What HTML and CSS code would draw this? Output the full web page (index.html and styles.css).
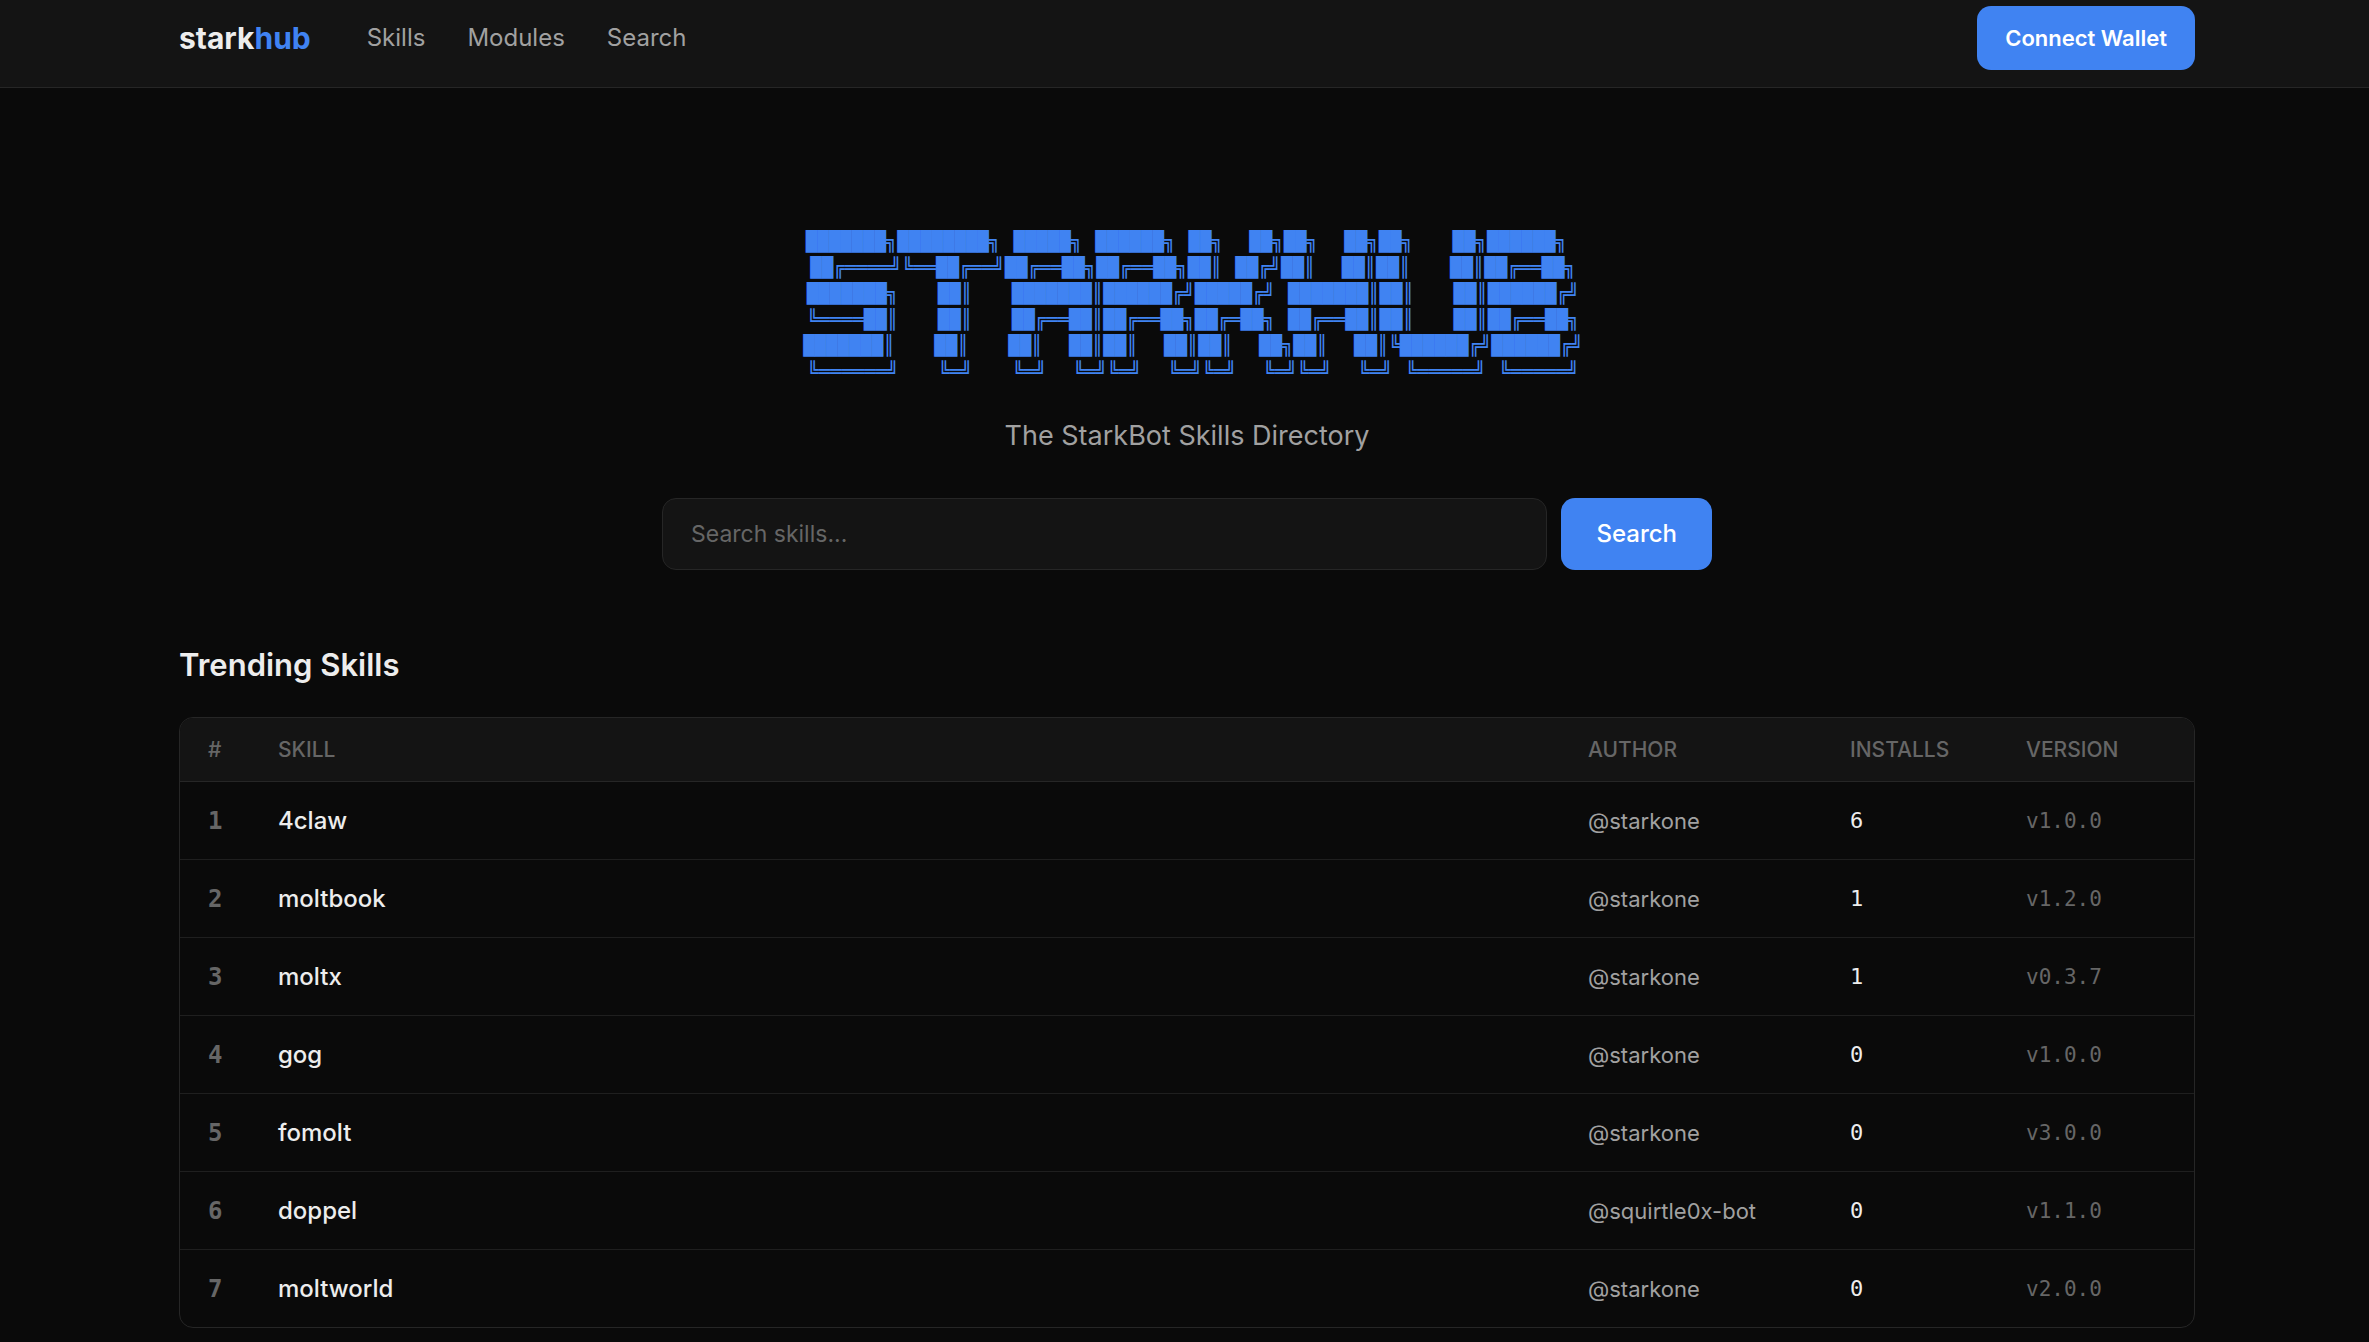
FILE: index.html
```html
<!doctype html>
<html lang="en">
<head>
    <meta charset="UTF-8">
    <title>starkhub</title>
    <link rel="stylesheet" href="styles.css">
</head>
<body>
<header class="header">
    <div class="container header-inner">
        <a class="logo" href="#">stark<span class="logo-accent">hub</span></a>
        <nav class="nav">
            <a href="#">Skills</a>
            <a href="#">Modules</a>
            <a href="#">Search</a>
        </nav>
        <button class="btn btn-wallet" type="button">Connect Wallet</button>
    </div>
</header>

<main class="container">
    <section class="hero">
        <div class="banner">
            <div class="line">███████╗████████╗<span> </span>█████╗<span> </span>██████╗<span> </span>██╗<span>  </span>██╗██╗<span>  </span>██╗██╗<span>   </span>██╗██████╗<span> </span></div>
            <div class="line">██╔════╝╚══██╔══╝██╔══██╗██╔══██╗██║<span> </span>██╔╝██║<span>  </span>██║██║<span>   </span>██║██╔══██╗</div>
            <div class="line">███████╗<span>   </span>██║<span>   </span>███████║██████╔╝█████╔╝<span> </span>███████║██║<span>   </span>██║██████╔╝</div>
            <div class="line">╚════██║<span>   </span>██║<span>   </span>██╔══██║██╔══██╗██╔═██╗<span> </span>██╔══██║██║<span>   </span>██║██╔══██╗</div>
            <div class="line">███████║<span>   </span>██║<span>   </span>██║<span>  </span>██║██║<span>  </span>██║██║<span>  </span>██╗██║<span>  </span>██║╚██████╔╝██████╔╝</div>
            <div class="line">╚══════╝<span>   </span>╚═╝<span>   </span>╚═╝<span>  </span>╚═╝╚═╝<span>  </span>╚═╝╚═╝<span>  </span>╚═╝╚═╝<span>  </span>╚═╝<span> </span>╚═════╝<span> </span>╚═════╝</div>
        </div>
        <p class="tagline">The StarkBot Skills Directory</p>
        <form class="search" action="">
            <input class="search-input" type="text" placeholder="Search skills..." aria-label="Search skills">
            <button class="btn btn-search" type="submit">Search</button>
        </form>
    </section>

    <section>
        <h2 class="title">Trending Skills</h2>
        <div class="table-wrap">
            <table class="table">
                <thead>
                <tr>
                    <th class="col-rank">#</th>
                    <th>Skill</th>
                    <th class="col-author">Author</th>
                    <th class="col-installs">Installs</th>
                    <th class="col-version">Version</th>
                </tr>
                </thead>
                <tbody>
                <tr>
                    <td class="rank">1</td>
                    <td><a class="skill" href="#">4claw</a></td>
                    <td class="author">@starkone</td>
                    <td class="installs">6</td>
                    <td class="version">v1.0.0</td>
                </tr>
                <tr>
                    <td class="rank">2</td>
                    <td><a class="skill" href="#">moltbook</a></td>
                    <td class="author">@starkone</td>
                    <td class="installs">1</td>
                    <td class="version">v1.2.0</td>
                </tr>
                <tr>
                    <td class="rank">3</td>
                    <td><a class="skill" href="#">moltx</a></td>
                    <td class="author">@starkone</td>
                    <td class="installs">1</td>
                    <td class="version">v0.3.7</td>
                </tr>
                <tr>
                    <td class="rank">4</td>
                    <td><a class="skill" href="#">gog</a></td>
                    <td class="author">@starkone</td>
                    <td class="installs">0</td>
                    <td class="version">v1.0.0</td>
                </tr>
                <tr>
                    <td class="rank">5</td>
                    <td><a class="skill" href="#">fomolt</a></td>
                    <td class="author">@starkone</td>
                    <td class="installs">0</td>
                    <td class="version">v3.0.0</td>
                </tr>
                <tr>
                    <td class="rank">6</td>
                    <td><a class="skill" href="#">doppel</a></td>
                    <td class="author">@squirtle0x-bot</td>
                    <td class="installs">0</td>
                    <td class="version">v1.1.0</td>
                </tr>
                <tr>
                    <td class="rank">7</td>
                    <td><a class="skill" href="#">moltworld</a></td>
                    <td class="author">@starkone</td>
                    <td class="installs">0</td>
                    <td class="version">v2.0.0</td>
                </tr>
                </tbody>
            </table>
        </div>
    </section>
</main>
</body>
</html>
```
FILE: styles.css
```css
* {
    box-sizing: border-box;
}

body {
    margin: 0;
    background: #0a0a0a;
    color: #ededed;
    font-family: Inter, "Liberation Sans", sans-serif;
    font-size: 24px;
    line-height: 36px;
}

a {
    color: inherit;
    text-decoration: none;
}

.container {
    padding: 0 174px 0 179px;
}

/* header */
.header {
    background: #141414;
    border-bottom: 1px solid #262626;
}

.header-inner {
    display: flex;
    align-items: center;
    padding-top: 6px;
    padding-bottom: 17px;
}

.logo {
    font-size: 30px;
    font-weight: 700;
}

.logo-accent {
    color: #4083f2;
}

.nav {
    display: flex;
    gap: 42px;
    margin-left: 56px;
    color: #a1a1a1;
}

.btn {
    border: 0;
    border-radius: 14px;
    background: #4083f2;
    color: #fff;
    font-family: inherit;
    font-size: 24px;
    font-weight: 500;
    line-height: 36px;
    cursor: pointer;
}

.btn-wallet {
    margin-left: auto;
    padding: 14px 28px;
    font-size: 22px;
    font-weight: 600;
}

/* hero */
.hero {
    padding-top: 140px;
    text-align: center;
}

.banner {
    padding-left: 12px;
    color: #4083f2;
    font-family: "DejaVu Sans Mono", monospace;
    font-size: 19px;
    line-height: 26px;
}

.line {
    white-space: pre;
}

/* the gaps are a bit wider than the blocks */
.line span {
    font-family: "Liberation Mono", monospace;
    font-size: 22px;
    line-height: 1;
}

.tagline {
    margin: 30px 0 40px;
    color: #a1a1a1;
    font-size: 27px;
    line-height: 44px;
}

.search {
    display: flex;
    gap: 14px;
    max-width: 1050px;
    margin: 0 auto;
}

.search-input {
    flex: 1;
    min-width: 0;
    padding: 17px 28px;
    border: 1px solid #262626;
    border-radius: 14px;
    background: #141414;
    color: #ededed;
    font-family: inherit;
    font-size: 23px;
    line-height: 36px;
}

.search-input::placeholder {
    color: #666;
}

.btn-search {
    padding: 18px 35px;
}

/* trending table */
.title {
    margin: 71px 0 28px;
    font-size: 31px;
    font-weight: 600;
    line-height: 48px;
}

.table-wrap {
    overflow: hidden;
    border: 1px solid #262626;
    border-radius: 14px;
}

.table {
    width: 100%;
    border-collapse: separate;
    border-spacing: 0;
    table-layout: fixed;
}

.table th {
    padding: 16px 28px;
    border-bottom: 1px solid #262626;
    background: #141414;
    color: #666;
    font-size: 21px;
    font-weight: 500;
    line-height: 31px;
    text-align: left;
    text-transform: uppercase;
}

.table td {
    height: 78px;
    padding: 0 28px;
    border-bottom: 1px solid #1f1f1f;
}

.table tbody tr:last-child td {
    height: 77px;
    border-bottom: 0;
}

.col-rank {
    width: 70px;
}

.col-author {
    width: 262px;
}

.col-installs {
    width: 176px;
}

.col-version {
    width: 196px;
}

.table .rank {
    padding-right: 0;
    color: #666;
    font-family: "DejaVu Sans Mono", monospace;
    font-weight: 700;
}

.skill {
    font-weight: 500;
}

.author {
    color: #a1a1a1;
    font-size: 22px;
}

.installs {
    font-family: "DejaVu Sans Mono", monospace;
    font-size: 22px;
}

.version {
    color: #666;
    font-family: "DejaVu Sans Mono", monospace;
    font-size: 21px;
}
```
